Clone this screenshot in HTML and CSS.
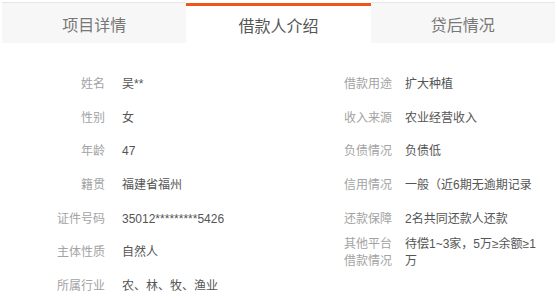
FILE: index.html
```html
<!DOCTYPE html>
<html lang="zh-CN">
<head>
    <meta charset="UTF-8">
    <title>借款人介绍</title>
    <link rel="stylesheet" href="styles.css">
</head>
<body>
    <div class="tabs">
        <div class="tab">项目详情</div>
        <div class="tab active">借款人介绍</div>
        <div class="tab">贷后情况</div>
    </div>

    <div class="info">
        <div class="col col-left">
            <div class="row"><span class="label">姓名</span><span class="value">吴**</span></div>
            <div class="row"><span class="label">性别</span><span class="value">女</span></div>
            <div class="row"><span class="label">年龄</span><span class="value">47</span></div>
            <div class="row"><span class="label">籍贯</span><span class="value">福建省福州</span></div>
            <div class="row"><span class="label">证件号码</span><span class="value">35012*********5426</span></div>
            <div class="row"><span class="label">主体性质</span><span class="value">自然人</span></div>
            <div class="row"><span class="label">所属行业</span><span class="value">农、林、牧、渔业</span></div>
        </div>
        <div class="col col-right">
            <div class="row"><span class="label">借款用途</span><span class="value">扩大种植</span></div>
            <div class="row"><span class="label">收入来源</span><span class="value">农业经营收入</span></div>
            <div class="row"><span class="label">负债情况</span><span class="value">负债低</span></div>
            <div class="row"><span class="label">信用情况</span><span class="value">一般（近6期无逾期记录</span></div>
            <div class="row"><span class="label">还款保障</span><span class="value">2名共同还款人还款</span></div>
            <div class="row"><span class="label">其他平台<br>借款情况</span><span class="value">待偿1~3家，5万≥余额≥1万</span></div>
        </div>
    </div>
</body>
</html>
```

FILE: styles.css
```css
body {
    margin: 0;
    padding: 0 2px;
    font-family: "Liberation Sans", "Noto Sans CJK SC", sans-serif;
    font-size: 12px;
    background: #fff;
}
.tabs {
    display: flex;
    margin-top: 2px;
}
.tab {
    flex: 1;
    height: 41px;
    box-sizing: border-box;
    padding-top: 13px;
    line-height: 20px;
    text-align: center;
    font-size: 16px;
    color: #777;
    background: #f7f7f7;
    border-top: 1px solid #e6e6e6;
}
.tab.active {
    color: #555;
    background: #fff;
    margin-top: 1px;
    height: 40px;
    padding-top: 11px;
    border-top: 3px solid #f0531c;
}
.info {
    display: flex;
    padding-top: 25px;
    margin-left: -2px;
}
.col-left {
    width: 278px;
    flex: none;
}
.col-right {
    flex: 1;
    min-width: 0;
    padding-left: 66px;
}
.row {
    display: flex;
    align-items: center;
    height: 33.6px;
    line-height: 17px;
}
.label {
    flex: none;
    color: #a3a3a3;
}
.value {
    color: #555;
}
.col-left .label {
    width: 105px;
    text-align: right;
}
.col-left .value {
    margin-left: 17px;
}
.col-right .label {
    width: 48px;
}
.col-right .value {
    margin-left: 13px;
    max-width: 137px;
}
```
